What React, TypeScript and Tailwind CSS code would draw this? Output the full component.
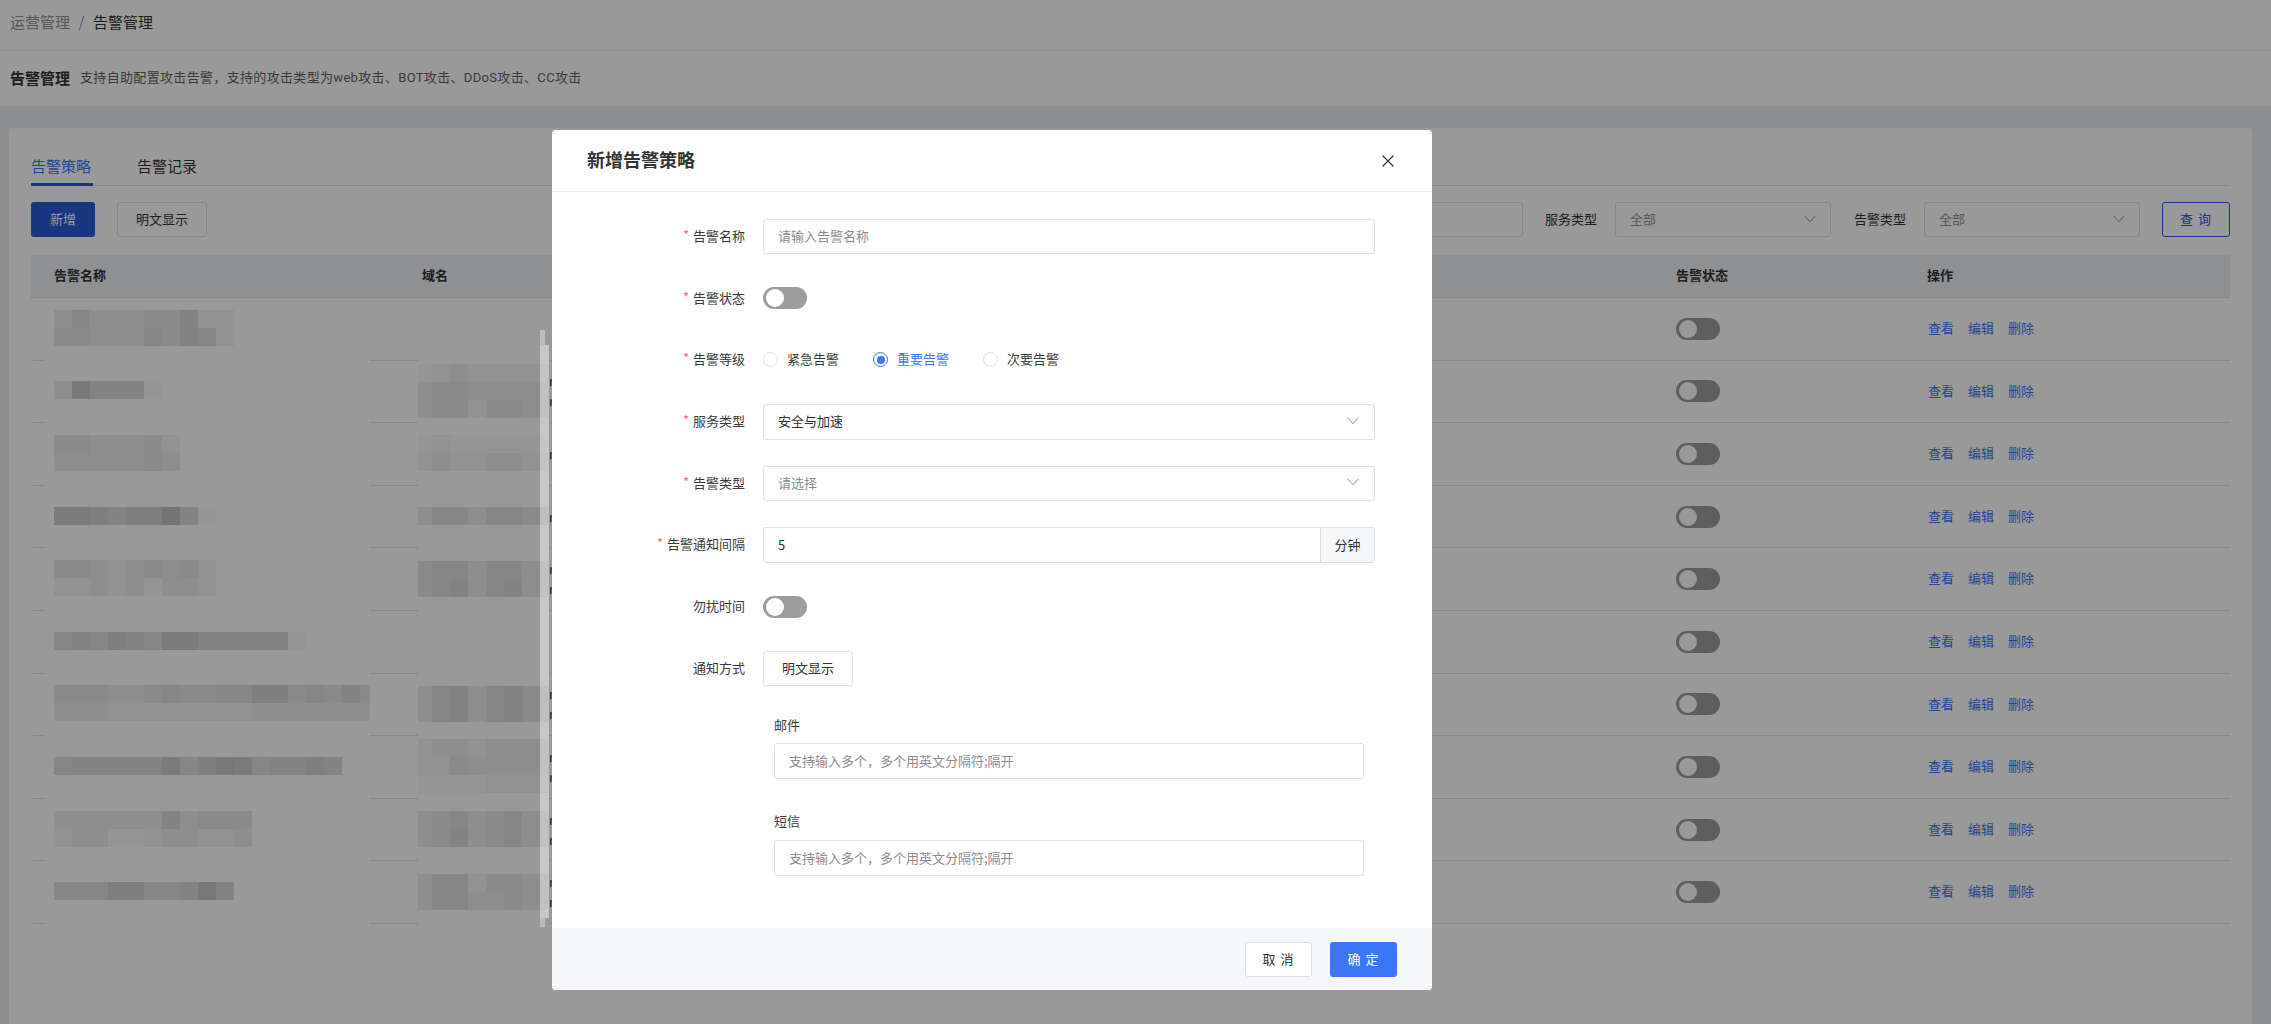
import React from "react";

const Chevron = ({ cls = "stroke-[#909399]" }: { cls?: string }) => (
  <svg width="12" height="8" viewBox="0 0 12 8" fill="none" className={`${cls} -translate-y-px`}>
    <path d="M0.6 0.8 L6 6.8 L11.4 0.8" strokeWidth="1" />
  </svg>
);

const T = ({ children, cls = "" }: { children: React.ReactNode; cls?: string }) => (
  <span className={`inline-block -translate-y-px ${cls}`}>{children}</span>
);

const Toggle = () => (
  <div className="w-[44px] h-[22px] rounded-full bg-[#9d9d9d] flex items-center pl-[2.5px] shrink-0">
    <div className="w-[18px] h-[18px] rounded-full bg-white" />
  </div>
);

const alphaOf = (c: string) => parseInt(c, 36) * 0.024;

const Mosaic = ({ lines, widths }: { lines: string[]; widths?: number[] }) => (
  <div className="flex flex-col">
    {lines.map((l, i) => (
      <div key={i} className="flex h-[18px]">
        {l.split("").map((c, j) => (
          <div
            key={j}
            className="h-full shrink-0"
            style={{ width: widths ? widths[j] : 18, backgroundColor: `rgba(0,0,0,${alphaOf(c)})` }}
          />
        ))}
      </div>
    ))}
  </div>
);

const col2W = [14, 18, 18, 18, 18, 18, 18, 9];

const rows: { a: string[]; b: string[]; n: number }[] = [
  { a: ["3533344622", "4433354652"], b: [], n: 0 },
  { a: ["396661"], b: ["12322222", "34433333", "34424433"], n: 2 },
  { a: ["4433342", "3333343"], b: ["12111111", "23223322"], n: 1 },
  { a: ["887677a61"], b: ["35535544"], n: 1 },
  { a: ["443234342", "223231332"], b: ["45535533", "45635633"], n: 2 },
  { a: ["56576588666661"], b: [], n: 0 },
  { a: ["444334544557745464", "333222222223333333"], b: ["35635644", "35635644"], n: 2 },
  { a: ["5666668579856676"], b: ["23323333", "22433333", "11112222"], n: 2 },
  { a: ["33333363444", "23311233223"], b: ["34534533", "34634533"], n: 2 },
  { a: ["5557755696"], b: ["35524433", "35533433"], n: 2 },
];

const Req = ({ star, children }: { star?: boolean; children: React.ReactNode }) => (
  <div className="w-[193px] shrink-0 flex items-center justify-end text-[13px] text-[#3a3a3a] mr-[18px]">
    {star && <span className="text-[#f56c6c] mr-[4px] relative -top-[2px] text-[13px]">*</span>}
    <T>{children}</T>
  </div>
);

const FieldBox = ({ children, cls = "" }: { children: React.ReactNode; cls?: string }) => (
  <div className={`h-full border border-[#dcdfe6] rounded-[3px] bg-white flex items-center text-[13px] ${cls}`}>{children}</div>
);

const Radio = ({ label, on }: { label: string; on?: boolean }) => (
  <div className="flex items-center w-[110px]">
    <div className={`w-[15px] h-[15px] rounded-full border flex items-center justify-center ${on ? "border-[#3b76f6]" : "border-[#dcdfe6]"}`}>
      {on && <div className="w-[8px] h-[8px] rounded-full bg-[#3b76f6]" />}
    </div>
    <span className={`ml-[9px] text-[13px] -translate-y-px ${on ? "text-[#3b76f6]" : "text-[#3a3a3a]"}`}>{label}</span>
  </div>
);

export default function App() {
  return (
    <div className="relative h-[1024px] w-[2271px] overflow-hidden bg-[#edeef2] font-['Noto_Sans_CJK_SC',sans-serif] text-[#333]">
      {/* page */}
      <div className="h-[51px] bg-white border-b border-[#f0f0f0] pl-[10px] pt-[12px] text-[15px] leading-[20px] flex">
        <span className="text-[#909399]">运营管理</span>
        <span className="text-[#909399] w-[23px] text-center">/</span>
        <span>告警管理</span>
      </div>
      <div className="h-[55px] bg-white pl-[10px] flex items-center pb-[1px]">
        <span className="text-[15px] font-bold">告警管理</span>
        <span className="text-[13px] ml-[10px] text-[#606266] tracking-[0.33px] font-['Roboto','Noto_Sans_CJK_SC',sans-serif]">
          支持自助配置攻击告警，支持的攻击类型为web攻击、BOT攻击、DDoS攻击、CC攻击
        </span>
      </div>
      <div className="mt-[22px] ml-[9px] w-[2243px] h-[900px] bg-white rounded-[4px] px-[22px] pt-[21px]">
        <div className="h-[37px] border-b border-[#e4e7ed] flex gap-[44px] text-[15px]">
          <div className="h-[37px] w-[62px] border-b-[3px] border-[#2b5ad8] text-[#3b76f6] leading-[34px] whitespace-nowrap">告警策略</div>
          <div className="h-[36px] leading-[34px] whitespace-nowrap">告警记录</div>
        </div>
        <div className="mt-[16px] h-[35px] flex items-center justify-between text-[13px]">
          <div className="flex gap-[22px]">
            <button className="w-[64px] h-[35px] rounded-[3px] bg-[#2b5ad8] text-white"><T>新增</T></button>
            <button className="w-[90px] h-[35px] rounded-[3px] border border-[#dcdfe6] bg-white"><T>明文显示</T></button>
          </div>
          <div className="flex items-center">
            <span className="mr-[18px]">域名</span>
            <div className="w-[216px] h-[35px] border border-[#dcdfe6] rounded-[3px]" />
            <T cls="ml-[22px] mr-[18px]">服务类型</T>
            <div className="w-[216px] h-[35px] border border-[#dcdfe6] rounded-[3px] pl-[14px] pr-[14px] flex items-center justify-between text-[#909399]">
              <T>全部</T>
              <Chevron />
            </div>
            <T cls="ml-[23px] mr-[18px]">告警类型</T>
            <div className="w-[216px] h-[35px] border border-[#dcdfe6] rounded-[3px] pl-[14px] pr-[14px] flex items-center justify-between text-[#909399]">
              <T>全部</T>
              <Chevron />
            </div>
            <button className="ml-[22px] w-[68px] h-[35px] rounded-[3px] border border-[#2b5ad8] text-[#2b5ad8] whitespace-pre tracking-[1px]"><T>查 询</T></button>
          </div>
        </div>
        <div className="mt-[18px] h-[43px] bg-[#edf0f4] border-b border-[#dfe1e6] flex items-center text-[13px] font-bold pb-[2px]">
          <div className="w-[391px] pl-[23px]">告警名称</div>
          <div className="w-[1254px]">域名</div>
          <div className="w-[251px]">告警状态</div>
          <div className="w-[303px]">操作</div>
        </div>
        {rows.map((r, i) => (
          <div key={i} className="h-[62.6px] flex text-[13px]">
            <div className="w-[14px] border-b border-[#dfe1e6]" />
            <div className="w-[325px] pl-[9px] pb-[3px] flex items-center overflow-hidden">
              <Mosaic lines={r.a} />
            </div>
            <div className="w-[48px] border-b border-[#dfe1e6]" />
            <div className="w-[131px] pb-[2px] flex items-center">
              <Mosaic lines={r.b} widths={col2W} />
            </div>
            <div className="w-[1127px] border-b border-[#dfe1e6] flex flex-col justify-center leading-[20px] text-[#333]">
              {Array.from({ length: r.n }).map((_, k) => (
                <span key={k}>n</span>
              ))}
            </div>
            <div className="w-[251px] border-b border-[#dfe1e6] flex items-center">
              <Toggle />
            </div>
            <div className="w-[303px] border-b border-[#dfe1e6] flex items-center gap-[14px] text-[#3b76f6] pl-[1px] pb-[2px]">
              <span>查看</span>
              <span>编辑</span>
              <span>删除</span>
            </div>
          </div>
        ))}
      </div>

      {/* mask */}
      <div className="absolute inset-0 z-10 bg-black/40" />
      <div className="absolute left-[540px] top-[330px] z-10 w-[5px] h-[15px] bg-white/35" />
      <div className="absolute left-[540px] top-[345px] z-10 w-[9px] h-[573px] bg-white/45" />
      <div className="absolute left-[540px] top-[918px] z-10 w-[5px] h-[9px] bg-white/35" />

      {/* dialog */}
      <div className="absolute left-[552px] top-[130px] z-20 w-[880px] h-[860px] bg-white rounded-[4px] flex flex-col overflow-hidden">
        <div className="h-[62px] shrink-0 border-b border-[#e8eaef] pl-[35px] pr-[38px] flex items-center justify-between">
          <T cls="text-[18px] font-bold text-[#333]">新增告警策略</T>
          <svg width="12" height="12" viewBox="0 0 12 12" fill="none" className="stroke-[#333]">
            <path d="M0.5 0.5 L11.5 11.5 M11.5 0.5 L0.5 11.5" strokeWidth="1.1" />
          </svg>
        </div>
        <div className="flex-1 pt-[26.75px]">
          <div className="flex flex-col gap-[26px]">
            <div className="h-[35.7px] flex">
              <Req star>告警名称</Req>
              <FieldBox cls="w-[612px] pl-[14px] text-[#8a8d93]"><T>请输入告警名称</T></FieldBox>
            </div>
            <div className="h-[35.7px] flex">
              <Req star>告警状态</Req>
              <div className="flex items-center"><Toggle /></div>
            </div>
            <div className="h-[35.7px] flex">
              <Req star>告警等级</Req>
              <div className="flex items-center">
                <Radio label="紧急告警" />
                <Radio label="重要告警" on />
                <Radio label="次要告警" />
              </div>
            </div>
            <div className="h-[35.7px] flex">
              <Req star>服务类型</Req>
              <FieldBox cls="w-[612px] pl-[14px] pr-[15px] justify-between text-[#333]">
                <T>安全与加速</T>
                <Chevron />
              </FieldBox>
            </div>
            <div className="h-[35.7px] flex">
              <Req star>告警类型</Req>
              <FieldBox cls="w-[612px] pl-[14px] pr-[15px] justify-between text-[#8a8d93]">
                <T>请选择</T>
                <Chevron />
              </FieldBox>
            </div>
            <div className="h-[35.7px] flex">
              <Req star>告警通知间隔</Req>
              <FieldBox cls="w-[612px] pl-[14px] text-[#333] justify-between overflow-hidden">
                5
                <div className="w-[54px] h-full bg-[#f5f7fa] border-l border-[#dcdfe6] flex items-center justify-center">分钟</div>
              </FieldBox>
            </div>
            <div className="h-[35.7px] flex">
              <Req>勿扰时间</Req>
              <div className="flex items-center"><Toggle /></div>
            </div>
            <div className="h-[35.7px] flex">
              <Req>通知方式</Req>
              <button className="w-[90px] h-full rounded-[3px] border border-[#dcdfe6] bg-white text-[13px] text-[#333]"><T>明文显示</T></button>
            </div>
          </div>
          <div className="ml-[222px] w-[590px] mt-[30px] flex flex-col gap-[34px] text-[13px]">
            <div>
              <div className="h-[18px] leading-[18px] text-[#3a3a3a]">邮件</div>
              <div className="mt-[9px] h-[36px]">
                <FieldBox cls="pl-[14px] text-[#8a8d93]"><T>支持输入多个，多个用英文分隔符;隔开</T></FieldBox>
              </div>
            </div>
            <div>
              <div className="h-[18px] leading-[18px] text-[#3a3a3a]"><T>短信</T></div>
              <div className="mt-[9px] h-[36px]">
                <FieldBox cls="pl-[14px] text-[#8a8d93]"><T>支持输入多个，多个用英文分隔符;隔开</T></FieldBox>
              </div>
            </div>
          </div>
        </div>
        <div className="h-[62px] shrink-0 bg-[#f5f7fa] flex items-center justify-end pr-[35px] gap-[18px] text-[13px]">
          <button className="w-[67px] h-[35px] rounded-[3px] border border-[#dcdfe6] bg-white text-[#333] whitespace-pre tracking-[1px]">取 消</button>
          <button className="w-[67px] h-[35px] rounded-[3px] bg-[#3b76f6] text-white whitespace-pre tracking-[1px]">确 定</button>
        </div>
      </div>
    </div>
  );
}
